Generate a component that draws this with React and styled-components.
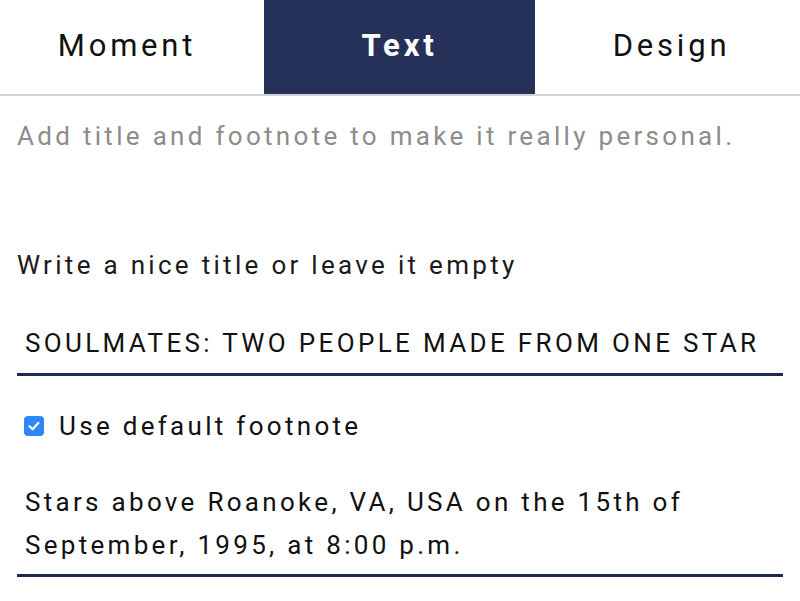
import React, { useState } from "react";
import styled, { createGlobalStyle } from "styled-components";

const Global = createGlobalStyle`
  html, body { margin: 0; padding: 0; background: #fff; }
  body { font-family: Roboto, "Noto Sans", "Liberation Sans", sans-serif; -webkit-font-smoothing: antialiased; }
  * { box-sizing: border-box; }
`;

const Page = styled.div`
  width: 800px;
  height: 601px;
  overflow: hidden;
  background: #fff;
`;

const Tabs = styled.div`
  display: grid;
  grid-template-columns: 264px 271px 1fr;
  height: 96px;
  border-bottom: 2px solid #d2d2d2;
`;

const Tab = styled.div`
  display: flex;
  align-items: center;
  justify-content: center;
  padding-bottom: 4px;
  padding-left: ${(p) => Math.max(p.$nudge || 0, 0)}px;
  padding-right: ${(p) => Math.max(-(p.$nudge || 0), 0)}px;
  font-size: 31px;
  letter-spacing: 3.8px;
  font-weight: ${(p) => (p.$active ? 700 : 400)};
  color: ${(p) => (p.$active ? "#fff" : "#111")};
  background: ${(p) => (p.$active ? "#263159" : "transparent")};
`;

const Body = styled.div`
  padding: 0 17px;
  display: flex;
  flex-direction: column;
`;

const Hint = styled.p`
  margin: 20px 0 0;
  line-height: 40px;
  font-size: 26px;
  letter-spacing: 3.3px;
  color: #8c8c8c;
`;

const Label = styled.div`
  margin-top: 89px;
  line-height: 40px;
  font-size: 26px;
  letter-spacing: 3.3px;
  color: #1a1a1a;
`;

const TitleInput = styled.input`
  margin-top: 27px;
  width: 100%;
  height: 64px;
  border: none;
  border-bottom: 3px solid #1e2a52;
  padding: 0 8px;
  outline: none;
  font-family: inherit;
  font-size: 26px;
  letter-spacing: 3.35px;
  color: #111;
  background: transparent;
`;

const CheckRow = styled.label`
  margin-top: 30px;
  display: flex;
  align-items: center;
  gap: 15px;
  height: 40px;
  padding-left: 7px;
  font-size: 26px;
  letter-spacing: 3.3px;
  color: #111;
`;

const Box = styled.span`
  width: 20px;
  height: 20px;
  border-radius: 4px;
  background: ${(p) => (p.$checked ? "#2f86f6" : "#fff")};
  border: ${(p) => (p.$checked ? "none" : "1px solid #999")};
  display: flex;
  align-items: center;
  justify-content: center;
`;

const Footnote = styled.textarea`
  margin-top: 27px;
  width: 100%;
  height: 104px;
  border: none;
  border-bottom: 3px solid #1e2a52;
  padding: 8px 8px 7px;
  outline: none;
  resize: none;
  overflow: hidden;
  font-family: inherit;
  font-size: 26px;
  line-height: 43px;
  letter-spacing: 3.3px;
  color: #111;
  background: transparent;
`;

export default function App() {
  const [checked, setChecked] = useState(true);
  return (
    <Page>
      <Global />
      <Tabs>
        <Tab $nudge={-10}>Moment</Tab>
        <Tab $active>Text</Tab>
        <Tab $nudge={8}>Design</Tab>
      </Tabs>
      <Body>
        <Hint>Add title and footnote to make it really personal.</Hint>
        <Label>Write a nice title or leave it empty</Label>
        <TitleInput defaultValue="SOULMATES: TWO PEOPLE MADE FROM ONE STAR" />
        <CheckRow onClick={() => setChecked(!checked)}>
          <Box $checked={checked}>
            {checked && (
              <svg width="14" height="14" viewBox="0 0 14 14">
                <path d="M2.5 7.3 L5.6 10.2 L11.5 3.8" fill="none" stroke="#fff" strokeWidth="2.2" strokeLinecap="round" strokeLinejoin="round" />
              </svg>
            )}
          </Box>
          Use default footnote
        </CheckRow>
        <Footnote
          rows={2}
          defaultValue="Stars above Roanoke, VA, USA on the 15th of September, 1995, at 8:00 p.m."
        />
      </Body>
    </Page>
  );
}
